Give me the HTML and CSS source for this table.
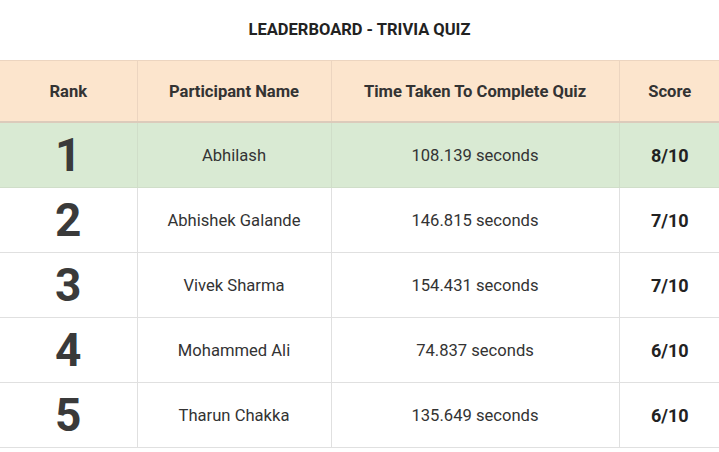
FILE: index.html
```html
<!DOCTYPE html>
<html>
<head>
<meta charset="utf-8">
<link rel="stylesheet" href="styles.css">
</head>
<body>
<h1 class="title">LEADERBOARD - TRIVIA QUIZ</h1>
<table class="board">
  <colgroup>
    <col class="c-rank"><col class="c-name"><col class="c-time"><col class="c-score">
  </colgroup>
  <thead>
    <tr><th>Rank</th><th>Participant Name</th><th>Time Taken To Complete Quiz</th><th>Score</th></tr>
  </thead>
  <tbody>
    <tr class="top"><td class="rank">1</td><td>Abhilash</td><td>108.139 seconds</td><td class="score">8/10</td></tr>
    <tr><td class="rank">2</td><td>Abhishek Galande</td><td>146.815 seconds</td><td class="score">7/10</td></tr>
    <tr><td class="rank">3</td><td>Vivek Sharma</td><td>154.431 seconds</td><td class="score">7/10</td></tr>
    <tr><td class="rank">4</td><td>Mohammed Ali</td><td>74.837 seconds</td><td class="score">6/10</td></tr>
    <tr><td class="rank">5</td><td>Tharun Chakka</td><td>135.649 seconds</td><td class="score">6/10</td></tr>
  </tbody>
</table>
</body>
</html>
```
FILE: styles.css
```css
html, body {
  margin: 0;
  padding: 0;
  background: #fff;
}
body {
  font-family: Roboto, "Liberation Sans", sans-serif;
  color: #333;
  overflow: hidden;
}
.title {
  margin: 0;
  height: 60px;
  line-height: 60px;
  text-align: center;
  font-size: 16.5px;
  font-weight: 700;
  color: #222;
}
.board {
  width: 720px;
  border-collapse: collapse;
  table-layout: fixed;
}
.c-rank { width: 137px; }
.c-name { width: 194px; }
.c-time { width: 288px; }
.c-score { width: 101px; }
.board th, .board td {
  text-align: center;
  vertical-align: middle;
  border: 1px solid #e0e0e0;
  padding: 0;
}
.board th:first-child, .board td:first-child { border-left: none; }
.board th:last-child, .board td:last-child { border-right: none; }
.board thead tr {
  background: #fce5cd;
}
.board th {
  height: 60px;
  font-size: 16.6px;
  font-weight: 700;
  color: #333;
  border-color: #ecd5c0;
  border-bottom: 2px solid #dccbbb;
}
.board td {
  height: 64px;
  font-size: 16.6px;
  color: #333;
}
.board tr.top {
  background: #d9ead3;
}
.board tr.top td {
  border-color: #d0dec9;
}
.board .rank {
  font-size: 46px;
  font-weight: 700;
  color: #3a3a3a;
}
.board .score {
  font-size: 18px;
  font-weight: 700;
  color: #222;
}
```
